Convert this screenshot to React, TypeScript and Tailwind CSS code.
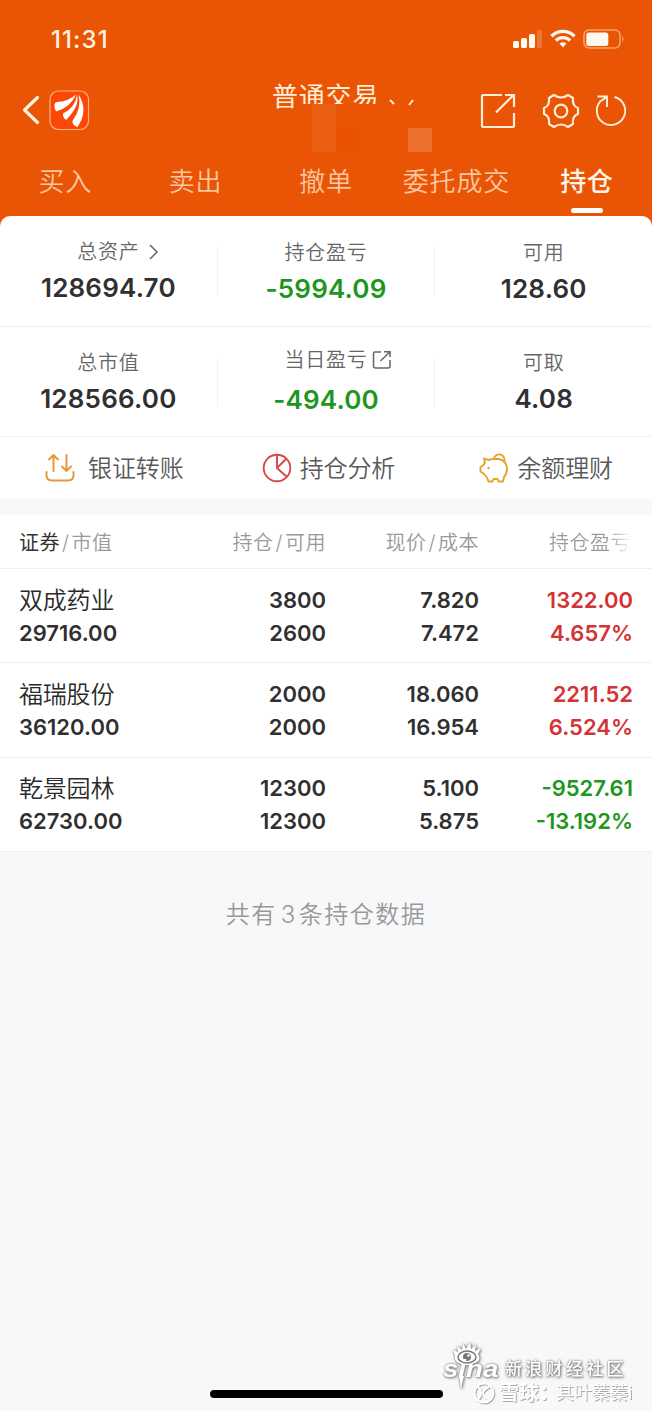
import { ReactNode } from "react"

const tabs = ["买入", "卖出", "撤单", "委托成交", "持仓"]

const holdings = [
  {
    name: "双成药业",
    value: "29716.00",
    amount: "3800",
    available: "2600",
    price: "7.820",
    cost: "7.472",
    profit: "1322.00",
    percent: "4.657%",
    up: true,
  },
  {
    name: "福瑞股份",
    value: "36120.00",
    amount: "2000",
    available: "2000",
    price: "18.060",
    cost: "16.954",
    profit: "2211.52",
    percent: "6.524%",
    up: true,
  },
  {
    name: "乾景园林",
    value: "62730.00",
    amount: "12300",
    available: "12300",
    price: "5.100",
    cost: "5.875",
    profit: "-9527.61",
    percent: "-13.192%",
    up: false,
  },
]

function StatusBar() {
  return (
    <div className="flex h-[78px] items-center justify-between pl-[51px] pr-[27px]">
      <span className="mt-[2px] text-[24px] font-medium tracking-[1.100px] text-[#fff3e0]">11:31</span>
      <div className="flex items-center gap-[7px]">
        <svg width="30" height="20" viewBox="0 0 30 20" fill="#fff8ec">
          <rect x="0" y="12" width="6" height="7" rx="1.5" />
          <rect x="8" y="9" width="6" height="10" rx="1.5" />
          <rect x="16" y="5" width="6" height="14" rx="1.5" />
          <rect x="24" y="1" width="5" height="18" rx="1.5" opacity=".2" />
        </svg>
        <svg width="26" height="20" viewBox="0 0 26 20" fill="none" stroke="#fff8ec" strokeWidth="3.4">
          <path d="M1.5 7.2C8 .8 18 .8 24.500 7.200" />
          <path d="M5.800 11.500C10 7.600 16 7.600 20.200 11.500" />
          <path d="M9.500 14.600Q13 12 16.500 14.600L13 18.600Z" fill="#fff8ec" stroke="none" />
        </svg>
        <svg width="42" height="20" viewBox="0 0 42 20">
          <rect x="1" y="1" width="36" height="18" rx="5" fill="none" stroke="#f5a16c" strokeWidth="1.6" />
          <rect x="3.300" y="3.500" width="22" height="13.500" rx="2.500" fill="#fff8ec" />
          <path d="M39 7q3 3 0 6z" fill="#f5a16c" />
        </svg>
      </div>
    </div>
  )
}

function TitleBar() {
  return (
    <div className="relative flex h-[66px] items-center pl-[22px] pr-[24px]">
      <svg className="mb-[2px]" width="18" height="30" viewBox="0 0 18 30" fill="none" stroke="#fff3e0" strokeWidth="3.2" strokeLinecap="round" strokeLinejoin="round">
        <path d="M15.500 2.500L2.500 15L15.500 27.500" />
      </svg>
      <svg className="mb-[2px] ml-[9px]" width="41" height="41" viewBox="0 0 41 41">
        <rect x="1" y="1" width="38.500" height="38.500" rx="8.500" fill="#fb4806" stroke="#ffb282" strokeWidth="1.200" />
        <path d="M5.500 14Q6 12 8.500 12Q20 11 27 4.500Q22 17 7 21.500Q5 18 5.500 14Z" fill="#fff" />
        <path d="M28 5Q31 16 17 30Q13.500 27 14 23.500Q26 18 28 5Z" fill="#fff" />
        <path d="M29.500 4.500Q40 20 28.500 37Q23 35 23.500 31Q33 18 29.500 4.500Z" fill="#fff" />
      </svg>
      <div className="flex-1" />
      <svg width="36" height="36" viewBox="0 0 36 36" fill="none" stroke="#ffeed8" strokeWidth="2.200">
        <path d="M22 2H3Q2 2 2 3V33Q2 34 3 34H33Q34 34 34 33V20M16 19.500L33.500 2M25 2H34V14" />
      </svg>
      <svg className="ml-[26px]" width="38" height="36" viewBox="0 0 38 36" fill="none" stroke="#ffeed8" strokeWidth="2.200" strokeLinejoin="round">
        <path d="M12 2Q19 7 26 2L31 5Q30 13 36 15V21Q30 23 31 31L26 34Q19 29 12 34L7 31Q8 23 2 21V15Q8 13 7 5Z" />
        <circle cx="19" cy="18" r="6.300" />
      </svg>
      <svg className="ml-[14px]" width="34" height="34" viewBox="0 0 34 34" fill="none" stroke="#ffeed8" strokeWidth="1.900">
        <path d="M20.500 3A14.200 14.200 0 1 1 6.500 7.200L12.800 3M3.500 2.500H13V13" />
      </svg>
      <div className="absolute left-[272px] top-[1px] text-[26px] leading-[36px] tracking-[0.8px] text-[#ffeed8]">
        普通交易
      </div>
      <svg className="absolute left-[298px] top-[18px]" width="136" height="58" viewBox="0 0 136 58">
        <rect x="0" y="8" width="136" height="26" fill="#e95504" />
        <rect x="14" y="8" width="24" height="48" fill="#eb5f14" />
        <rect x="38" y="32" width="24" height="24" fill="#e95202" />
        <rect x="110" y="32" width="24" height="24" fill="#ee702d" />
        <path d="M92 4L96 8M115 4L111 9" stroke="#ffeed8" strokeWidth="2" />
      </svg>
    </div>
  )
}

function Tabs() {
  return (
    <div className="flex h-[72px]">
      {tabs.map((tab, index) => (
        <div key={tab} className="flex flex-1 flex-col items-center">
          <div
            className={
              index === 4
                ? "mt-[19px] whitespace-nowrap text-[26px] font-medium leading-[38px] tracking-[0.6px] text-[#fff6ea]"
                : "mt-[19px] whitespace-nowrap text-[26px] font-[350] leading-[38px] tracking-[0.8px] text-[#fbc6a0]"
            }
          >
            {tab}
          </div>
          {index === 4 && <div className="mt-[7px] h-[5px] w-[32px] rounded-full bg-white" />}
        </div>
      ))}
    </div>
  )
}

type StatProps = {
  label: string
  value: string
  green?: boolean
  icon?: ReactNode
  className?: string
}

function Stat({ label, value, green, icon, className = "pt-[22px]" }: StatProps) {
  return (
    <div className={`flex flex-1 flex-col items-center ${className}`}>
      <div className="flex h-[30px] items-center text-[20px] font-[350] tracking-[0.8px] text-[#666]">
        {label}
        {icon}
      </div>
      <div
        className={
          green
            ? "mt-[4px] text-[26px] font-semibold leading-[34px] tracking-[0.2px] text-[#1e961e]"
            : "mt-[4px] text-[26px] font-semibold leading-[34px] tracking-[0.2px] text-[#303032]"
        }
      >
        {value}
      </div>
    </div>
  )
}

function Summary() {
  const divider = <div className="mt-[31px] h-[49px] w-px bg-[#f1f1f3]" />
  return (
    <div className="rounded-t-[10px] bg-white">
      <div className="flex h-[111px] border-b border-[#efeff1]">
        <Stat
          className="pt-[21px]"
          label="总资产"
          value="128694.70"
          icon={
            <svg className="-mr-[20px] ml-[8px]" width="12" height="18" viewBox="0 0 12 18" fill="none" stroke="#666" strokeWidth="1.500">
              <path d="M2 2L9 9L2 16" />
            </svg>
          }
        />
        {divider}
        <Stat label="持仓盈亏" value="-5994.09" green />
        {divider}
        <Stat label="可用" value="128.60" />
      </div>
      <div className="flex h-[110px] border-b border-[#efeff1]">
        <Stat label="总市值" value="128566.00" className="pt-[21px]" />
        {divider}
        <Stat
          label="当日盈亏"
          value="-494.00"
          green
          icon={
            <svg className="-mr-[24px] ml-[4px]" width="20" height="20" viewBox="0 0 20 20" fill="none" stroke="#666" strokeWidth="1.500">
              <path d="M9 2H3Q1.500 2 1.500 3.500V16Q1.500 18 3.500 18H16Q18 18 18 16V10M8.500 11L18 1.800M12 1.800H18V7" />
            </svg>
          }
          className="pt-[18px] [&>div:last-child]:mt-[8px]"
        />
        {divider}
        <Stat label="可取" value="4.08" className="pt-[21px]" />
      </div>
    </div>
  )
}

function Actions() {
  return (
    <div className="flex h-[62px] items-center bg-white text-[24px] font-[350] tracking-[-0.100px] text-[#5a5a5a]">
      <div className="flex flex-1 items-center pl-[45px]">
        <svg width="30" height="30" viewBox="0 0 30 30" fill="none" stroke="#e49a3c" strokeWidth="2" strokeLinecap="round" strokeLinejoin="round">
          <path d="M8.500 18V2M4 6.500L8.500 2L13 6.500M21.500 2V18M17 13.500L21.500 18L26 13.500M1.500 19V22Q1.500 27.500 7 27.500H23Q28.500 27.500 28.500 22V19" />
        </svg>
        <span className="ml-[13px] mt-[2px]">银证转账</span>
      </div>
      <div className="flex flex-1 items-center pl-[44px]">
        <svg width="30" height="30" viewBox="0 0 30 30" fill="none" stroke="#d94747" strokeWidth="1.900">
          <circle cx="15" cy="15" r="13.300" />
          <path d="M15 1.500V15L25 24M15 15L24 6" />
        </svg>
        <span className="ml-[8px] mt-[2px]">持仓分析</span>
      </div>
      <div className="flex flex-1 items-center pl-[45px]">
        <svg width="30" height="30" viewBox="0 0 30 30" fill="none" stroke="#e5a52a" strokeWidth="1.900" strokeLinejoin="round">
          <path d="M5 5.500L9.500 7Q12 6 15 6H20Q28 8 28 16Q28 21 25 24L24 28.500H19.500L18.500 26H14.500L13.500 28.500H9.500L8 24.500L5 21L1.500 18.500V14L4 12.500L5.800 10Z" />
          <path d="M15 6A5.200 5.200 0 1 1 25 8.500" />
          <circle cx="9.500" cy="15" r="1.200" fill="#e5a52a" stroke="none" />
        </svg>
        <span className="ml-[8px] mt-[2px]">余额理财</span>
      </div>
    </div>
  )
}

function Holdings() {
  return (
    <div className="mt-[16px] bg-white">
      <div className="flex h-[54px] items-center border-b border-[#efeff1] pl-[19px] pr-5 pt-[2px] text-[20px] font-[350] tracking-[0.5px] text-[#999]">
        <div className="w-[153px]">
          <span className="font-normal text-[#333]">证券</span>
          <span className="mx-[2px]">/</span>市值
        </div>
        <div className="w-[154px] text-right">
          持仓<span className="mx-[2px]">/</span>可用
        </div>
        <div className="w-[153px] text-right">
          现价<span className="mx-[2px]">/</span>成本
        </div>
        <div className="w-[152px] bg-gradient-to-r from-[#999] from-85% to-white bg-clip-text text-right text-transparent">
          持仓盈亏
        </div>
      </div>
      {holdings.map((item) => (
        <div
          key={item.name}
          className="flex h-[94.300px] items-center border-b border-[#efeff1] pl-[19px] pr-[19px] pt-[2px] text-[22px] font-semibold leading-[33px] text-[#303032]"
        >
          <div className="w-[153px]">
            <div className="text-[24px] font-[350] tracking-[-0.200px] text-[#2a2a2a]">{item.name}</div>
            <div>{item.value}</div>
          </div>
          <div className="w-[154px] text-right">
            <div>{item.amount}</div>
            <div>{item.available}</div>
          </div>
          <div className="w-[153px] text-right">
            <div>{item.price}</div>
            <div>{item.cost}</div>
          </div>
          <div className={item.up ? "w-[154px] text-right text-[#d23434]" : "w-[154px] text-right text-[#1e961e]"}>
            <div>{item.profit}</div>
            <div>{item.percent}</div>
          </div>
        </div>
      ))}
    </div>
  )
}

function Watermark() {
  return (
    <div className="absolute bottom-[8px] left-[440px] w-[212px] whitespace-nowrap text-white">
      <div className="flex h-[50px] items-end pl-[3px] [filter:drop-shadow(0_0_1px_#777)_drop-shadow(1px_1px_1px_#999)]">
        <div className="relative w-[58px]">
          <svg className="absolute left-[10px] top-[-14px]" width="30" height="24" viewBox="0 0 30 24">
            <path d="M2 14L0 8L5 10L4 4L9 8L10 1L13 7L17 0L18 7L23 2L22 9L28 6L25 12Q29 18 22 21Q12 26 4 20Q1 17 2 14Z" fill="#fff" />
            <ellipse cx="14" cy="15" rx="9" ry="6" fill="none" stroke="#777" strokeWidth="1.500" />
            <circle cx="14" cy="15" r="4" fill="#777" />
            <circle cx="15.500" cy="13.500" r="1.300" fill="#fff" />
          </svg>
          <svg className="absolute left-[14px] top-[20px]" width="8" height="14" viewBox="0 0 8 14">
            <path d="M2 0H7L4 13Z" fill="#fff" />
          </svg>
          <div className="w-fit origin-left scale-x-[1.150] font-['Liberation_Sans',sans-serif] text-[24px] font-bold italic leading-[26px]">
            sina
          </div>
        </div>
        <span className="ml-[4px] text-[17px] font-medium leading-[26px] tracking-[3.300px]">新浪财经社区</span>
      </div>
      <div className="flex h-[21px] items-center pl-[33px] [filter:drop-shadow(1px_1px_0_#aaa)]">
        <svg width="22" height="22" viewBox="0 0 22 22" fill="none" stroke="#fff" strokeWidth="2">
          <circle cx="11" cy="11" r="9.500" />
          <path d="M5 4.500Q11 11 5 17.500M16.500 4.500Q10 8 10 11T16.500 17.500" />
        </svg>
        <span className="ml-[4px] text-[20px] font-bold">雪球：</span>
        <span className="ml-[-3px] text-[18px]">其叶蓁蓁i</span>
      </div>
    </div>
  )
}

export default function App() {
  return (
    <div className="relative flex h-[1411px] w-[652px] flex-col overflow-hidden bg-[#f7f8fa] font-['Inter','Noto_Sans_CJK_SC',sans-serif]">
      <div className="bg-[#e95504]">
        <StatusBar />
        <TitleBar />
        <Tabs />
        <Summary />
      </div>
      <Actions />
      <Holdings />
      <div className="mt-[44px] text-center text-[24px] font-[350] leading-[38px] tracking-[1.500px] text-[#999]">
        共有<span className="ml-[4px] mr-[2px]">3</span>条持仓数据
      </div>
      <div className="mx-auto mb-[13px] mt-auto h-[8px] w-[233px] rounded-full bg-black" />
      <Watermark />
    </div>
  )
}
